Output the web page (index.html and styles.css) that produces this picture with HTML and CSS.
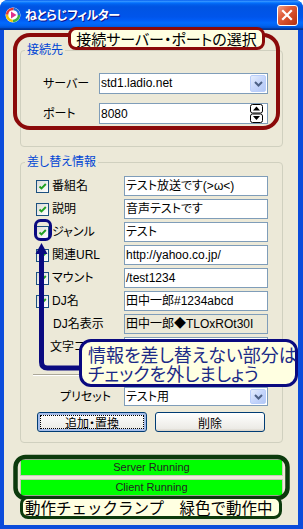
FILE: index.html
```html
<!DOCTYPE html>
<html lang="ja">
<head>
    <meta charset="UTF-8">
    <meta name="viewport" content="width=device-width, initial-scale=1.0">
    <title>ねとらじフィルター</title>
    <link rel="stylesheet" href="styles.css">
</head>
<body>
    <div class="window">
        <div class="titlebar">
            <svg class="app-icon" width="16" height="16" viewBox="0 0 16 16">
                <circle cx="8" cy="8" r="7.5" fill="#fff"/>
                <circle cx="8" cy="8" r="6" fill="none" stroke="#3cb043" stroke-width="2.5" stroke-dasharray="9.42 28.28" stroke-dashoffset="0"/>
                <circle cx="8" cy="8" r="6" fill="none" stroke="#f5c400" stroke-width="2.5" stroke-dasharray="9.42 28.28" stroke-dashoffset="-9.42"/>
                <circle cx="8" cy="8" r="6" fill="none" stroke="#e53935" stroke-width="2.5" stroke-dasharray="9.42 28.28" stroke-dashoffset="-18.85"/>
                <circle cx="8" cy="8" r="6" fill="none" stroke="#1e6fd9" stroke-width="2.5" stroke-dasharray="9.42 28.28" stroke-dashoffset="-28.27"/>
                <path d="M6 4.5 L11.5 8 L6 11.5 Z" fill="#e0308c"/>
            </svg>
            <span class="title">ねとらじフィルター</span>
            <span class="close-btn">
                <svg width="21" height="21" viewBox="0 0 21 21">
                    <path d="M6 6 L14 14 M14 6 L6 14" stroke="#fff" stroke-width="2.2" stroke-linecap="square"/>
                </svg>
            </span>
        </div>

        <div class="client">
            <div class="group group-conn">
                <div class="group-title">接続先</div>
                <div class="conn-row first">
                    <span class="conn-label">サーバー</span>
                    <div class="combo wide">
                        <span class="combo-text">std1.ladio.net</span>
                        <span class="combo-btn">
                            <svg width="9" height="6" viewBox="0 0 9 6"><path d="M1 1 L4.5 4.5 L8 1" fill="none" stroke="#4d6185" stroke-width="2"/></svg>
                        </span>
                    </div>
                </div>
                <div class="conn-row">
                    <span class="conn-label">ポート</span>
                    <div class="textbox wide spin-box">
                        <span class="box-text">8080</span>
                        <svg class="spinner" width="13" height="19" viewBox="0 0 13 19">
                            <rect x="0.5" y="0.5" width="12" height="8.5" rx="2" fill="#fff" stroke="#000"/>
                            <rect x="0.5" y="10" width="12" height="8.5" rx="2" fill="#fff" stroke="#000"/>
                            <path d="M6.5 2.5 L10 6.5 L3 6.5 Z" fill="#000"/>
                            <path d="M3 12 L10 12 L6.5 16 Z" fill="#000"/>
                        </svg>
                    </div>
                </div>
            </div>

            <div class="group group-info">
                <div class="group-title">差し替え情報</div>
                <div class="info-rows">
                    <div class="info-row">
                        <span class="check"><svg width="11" height="11" viewBox="0 0 11 11"><path d="M2.5 5.5 L4.5 7.5 L8.8 3" fill="none" stroke="#21a121" stroke-width="1.9"/></svg></span>
                        <span class="info-label">番組名</span>
                        <div class="textbox">テスト放送です(&gt;ω&lt;)</div>
                    </div>
                    <div class="info-row">
                        <span class="check"><svg width="11" height="11" viewBox="0 0 11 11"><path d="M2.5 5.5 L4.5 7.5 L8.8 3" fill="none" stroke="#21a121" stroke-width="1.9"/></svg></span>
                        <span class="info-label">説明</span>
                        <div class="textbox">音声テストです</div>
                    </div>
                    <div class="info-row">
                        <span class="check"><svg width="11" height="11" viewBox="0 0 11 11"><path d="M2.5 5.5 L4.5 7.5 L8.8 3" fill="none" stroke="#21a121" stroke-width="1.9"/></svg></span>
                        <span class="info-label">ジャンル</span>
                        <div class="textbox">テスト</div>
                    </div>
                    <div class="info-row">
                        <span class="check"><svg width="11" height="11" viewBox="0 0 11 11"><path d="M2.5 5.5 L4.5 7.5 L8.8 3" fill="none" stroke="#21a121" stroke-width="1.9"/></svg></span>
                        <span class="info-label">関連URL</span>
                        <div class="textbox">http://yahoo.co.jp/</div>
                    </div>
                    <div class="info-row">
                        <span class="check"><svg width="11" height="11" viewBox="0 0 11 11"><path d="M2.5 5.5 L4.5 7.5 L8.8 3" fill="none" stroke="#21a121" stroke-width="1.9"/></svg></span>
                        <span class="info-label">マウント</span>
                        <div class="textbox">/test1234</div>
                    </div>
                    <div class="info-row">
                        <span class="check"><svg width="11" height="11" viewBox="0 0 11 11"><path d="M2.5 5.5 L4.5 7.5 L8.8 3" fill="none" stroke="#21a121" stroke-width="1.9"/></svg></span>
                        <span class="info-label">DJ名</span>
                        <div class="textbox">田中一郎#1234abcd</div>
                    </div>
                    <div class="info-row">
                        <span class="info-label plain dj">DJ名表示</span>
                        <div class="textbox readonly">田中一郎◆TLOxROt30I</div>
                    </div>
                    <div class="info-row">
                        <span class="info-label plain charset">文字コード</span>
                        <div class="combo">
                            <span class="combo-text">Shift_JIS</span>
                            <span class="combo-btn">
                                <svg width="9" height="6" viewBox="0 0 9 6"><path d="M1 1 L4.5 4.5 L8 1" fill="none" stroke="#4d6185" stroke-width="2"/></svg>
                            </span>
                        </div>
                    </div>
                </div>

                <div class="separator"></div>

                <div class="info-row preset-row">
                    <span class="info-label plain preset">プリセット</span>
                    <div class="combo">
                        <span class="combo-text">テスト用</span>
                        <span class="combo-btn">
                            <svg width="9" height="6" viewBox="0 0 9 6"><path d="M1 1 L4.5 4.5 L8 1" fill="none" stroke="#4d6185" stroke-width="2"/></svg>
                        </span>
                    </div>
                </div>

                <div class="button-row">
                    <button class="btn btn-default">追加・置換</button>
                    <button class="btn">削除</button>
                </div>
            </div>

            <div class="lamps">
                <div class="lamp">Server Running</div>
                <div class="lamp">Client Running</div>
            </div>
        </div>

        <!-- 注釈の枠と矢印 -->
        <svg class="marks" width="303" height="529" viewBox="0 0 303 529">
            <rect x="15" y="35" width="263" height="93" rx="15" fill="none" stroke="#8b0a0a" stroke-width="4"/>
            <rect x="35.5" y="220.5" width="15" height="19" rx="5" fill="none" stroke="#0a0a80" stroke-width="3"/>
            <path d="M41.5 243 L47.5 254 L35.5 254 Z" fill="#0a0a80"/>
            <path d="M41.5 252 V362 Q41.5 368 47.5 368 H82" fill="none" stroke="#0a0a80" stroke-width="5"/>
            <rect x="15.5" y="457" width="272" height="41" rx="10" fill="none" stroke="#0c3a0c" stroke-width="4.5"/>
        </svg>

        <div class="callout callout-red">接続サーバー・ポートの選択</div>
        <div class="callout callout-blue">情報を差し替えない部分は<br>チェックを外しましょう</div>
        <div class="callout callout-green">動作チェックランプ　緑色で動作中</div>
    </div>
</body>
</html>
```

FILE: styles.css
```css
* {
    margin: 0;
    padding: 0;
    box-sizing: border-box;
}

html, body {
    width: 303px;
    height: 529px;
    overflow: hidden;
    background: #fff;
}

body {
    font-family: "Liberation Sans", "Noto Sans CJK JP", sans-serif;
    font-size: 12px;
    font-feature-settings: "palt";
    color: #000;
}

.window {
    position: relative;
    width: 303px;
    height: 529px;
    display: flex;
    flex-direction: column;
    background: #0b4cdb;
    border-radius: 8px 8px 0 0;
}

/* タイトルバー */
.titlebar {
    height: 30px;
    display: flex;
    align-items: center;
    padding: 0 5px 0 5px;
    border-radius: 8px 8px 0 0;
    background: linear-gradient(to bottom,
        #0058ee 0%, #3593ff 4%, #288eff 6%, #127dff 8%, #036ffc 10%,
        #0262ee 14%, #0057e5 20%, #0054e3 24%, #0055eb 56%, #005bf5 66%,
        #026afe 76%, #0062ef 86%, #0052d6 92%, #0040ab 94%, #003092 100%);
}

.app-icon {
    flex: none;
}

.title {
    margin-left: 4px;
    flex: 1;
    color: #fff;
    font-family: "Noto Sans CJK JP", sans-serif;
    font-weight: bold;
    font-size: 12px;
    line-height: 14px;
    letter-spacing: -0.3px;
    text-shadow: 1px 1px 0 #0f1089;
}

.close-btn {
    width: 21px;
    height: 21px;
    display: flex;
    border: 1px solid #fff;
    border-radius: 3px;
    background: linear-gradient(135deg, #f0a189 0%, #e1603d 35%, #cc4522 70%, #b33312 100%);
}

.close-btn svg {
    margin: -1px;
}

/* クライアント領域 */
.client {
    flex: 1;
    margin: 0 5px 4px 4px;
    padding: 0 15px 0 16px;
    background: #ece9d8;
}

.group {
    border: 1px solid #d0d0bf;
    border-radius: 4px;
}

.group-title {
    width: fit-content;
    margin: -8px 0 0 4px;
    padding: 0 2px;
    background: #ece9d8;
    color: #0046d5;
    font-size: 12px;
    line-height: 14px;
}

.group-conn {
    margin-top: 20px;
    padding-bottom: 22px;
}

.conn-row {
    display: flex;
    align-items: center;
    height: 21px;
    margin-top: 9px;
    padding-left: 22px;
}

.conn-row.first {
    margin-top: 16px;
}

.conn-label {
    width: 56px;
    line-height: 14px;
}

.textbox {
    width: 144px;
    height: 20px;
    border: 1px solid #7f9db9;
    background: #fff;
    padding: 0 1px;
    line-height: 18px;
    white-space: nowrap;
    overflow: hidden;
}

.textbox.wide,
.combo.wide {
    width: 169px;
    height: 21px;
}

.textbox.readonly {
    background: #ebe9d8;
}

.spin-box {
    display: flex;
    align-items: center;
    padding-right: 4px;
}

.box-text {
    flex: 1;
}

.combo {
    width: 144px;
    height: 20px;
    display: flex;
    border: 1px solid #7f9db9;
    background: #fff;
}

.combo-text {
    flex: 1;
    padding-left: 1px;
    line-height: 18px;
    white-space: nowrap;
    overflow: hidden;
}

.combo-btn {
    width: 16px;
    margin: 1px;
    display: flex;
    align-items: center;
    justify-content: center;
    border: 1px solid #b9cefb;
    border-radius: 2px;
    background: linear-gradient(135deg, #e6eefc 0%, #c6d6fb 50%, #b3c8f5 100%);
}

.group-info {
    margin-top: 15px;
    padding-bottom: 10px;
}

.info-rows {
    display: flex;
    flex-direction: column;
    gap: 3px;
    margin-top: 7px;
}

.info-row {
    display: flex;
    align-items: center;
    height: 20px;
    padding-left: 15px;
}

.check {
    width: 13px;
    height: 13px;
    margin-right: 3px;
    display: flex;
    border: 1px solid #1c5180;
    background: linear-gradient(135deg, #dcdcd7, #fff);
}

.info-label {
    width: 72px;
    line-height: 14px;
    white-space: nowrap;
}

.info-label.plain {
    width: 88px;
}

.info-label.dj {
    padding-left: 17px;
}

.info-label.charset {
    padding-left: 14px;
}

.info-label.preset {
    padding-left: 24px;
}

.separator {
    height: 2px;
    margin: 17px 12px 0 12px;
    border-top: 1px solid #aca899;
    border-bottom: 1px solid #fff;
}

.preset-row {
    margin-top: 11px;
    height: 19px;
}

.preset-row .combo {
    height: 19px;
}

.button-row {
    display: flex;
    gap: 8px;
    margin-top: 6px;
    padding-left: 16px;
}

.btn {
    width: 110px;
    height: 20px;
    border: 1px solid #003c74;
    border-radius: 3px;
    background: linear-gradient(to bottom, #fff 0%, #ecebe6 86%, #d6d0c5 100%);
    font-family: "Liberation Sans", "Noto Sans CJK JP", sans-serif;
    font-size: 12px;
    font-feature-settings: "palt";
    color: #000;
}

.btn-default {
    box-shadow: inset 0 0 0 2px #a6bde9;
    outline: 1px dotted #000;
    outline-offset: -4px;
}

/* 動作ランプ */
.lamps {
    display: flex;
    flex-direction: column;
    gap: 3px;
    margin-top: 16px;
}

.lamp {
    height: 17px;
    border: 1px solid #c8c8b8;
    background: #00ff00;
    color: #222;
    font-size: 11px;
    line-height: 15px;
    text-align: center;
}

/* 注釈 */
.marks {
    position: absolute;
    left: 0;
    top: 0;
    pointer-events: none;
}

.callout {
    position: absolute;
    background: #ffffe1;
    font-family: "Noto Sans CJK JP", sans-serif;
    white-space: nowrap;
}

.callout-red {
    left: 68px;
    top: 27px;
    width: 197px;
    height: 23px;
    border: 3px solid #8b0a0a;
    border-radius: 8px;
    font-size: 15px;
    line-height: 17px;
    text-align: center;
}

.callout-blue {
    left: 79px;
    top: 339px;
    width: 219px;
    height: 48px;
    padding: 3px 0 0 6px;
    border: 3px solid #0a0a80;
    border-radius: 12px;
    color: #1b2a87;
    font-size: 18px;
    line-height: 19px;
}

.callout-green {
    left: 20px;
    top: 496px;
    width: 262px;
    height: 23px;
    padding-left: 2px;
    border: 3px solid #0c3a0c;
    border-radius: 8px;
    font-size: 15.5px;
    line-height: 17px;
    font-feature-settings: normal;
}
```
